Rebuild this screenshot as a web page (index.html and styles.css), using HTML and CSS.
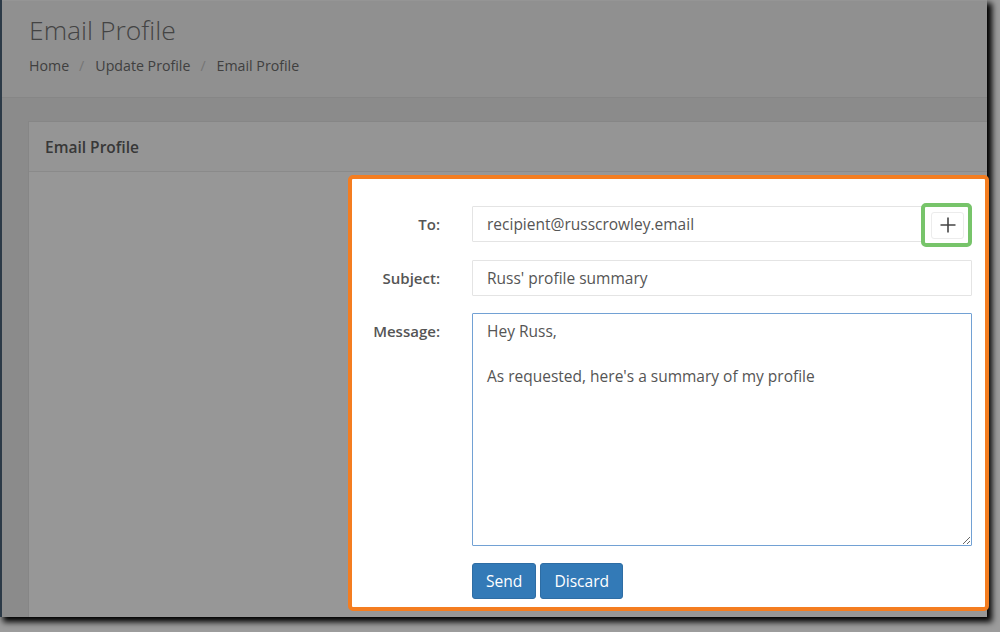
FILE: index.html
```html
<!DOCTYPE html>
<html lang="en">
<head>
<meta charset="utf-8">
<title>Email Profile</title>
<link rel="stylesheet" href="styles.css">
</head>
<body>
<div class="screen">
  <div class="sidebar-edge"></div>
  <div class="main">
    <div class="page-header">
      <h1 class="page-title">Email Profile</h1>
      <ol class="breadcrumb">
        <li>Home</li>
        <li class="sep">/</li>
        <li>Update Profile</li>
        <li class="sep">/</li>
        <li>Email Profile</li>
      </ol>
    </div>
    <div class="content">
      <div class="card">
        <div class="card-header">Email Profile</div>
        <div class="card-body">
          <form class="highlight">
            <div class="form-row">
              <label class="label">To:</label>
              <div class="field">
                <input class="input" type="text" value="recipient@russcrowley.email">
                <div class="add-box"><span class="add-btn"><svg width="18" height="18" viewBox="0 0 18 18"><path d="M9 1.5v15M1.5 9h15" stroke="#454545" stroke-width="1.6" fill="none"/></svg></span></div>
              </div>
            </div>
            <div class="form-row">
              <label class="label">Subject:</label>
              <div class="field">
                <input class="input" type="text" value="Russ' profile summary">
              </div>
            </div>
            <div class="form-row">
              <label class="label">Message:</label>
              <div class="field">
                <textarea class="textarea">Hey Russ,

As requested, here's a summary of my profile</textarea>
              </div>
            </div>
            <div class="actions">
              <button type="button" class="btn">Send</button>
              <button type="button" class="btn">Discard</button>
            </div>
          </form>
        </div>
      </div>
    </div>
    <div class="overlay"></div>
  </div>
</div>
</body>
</html>
```

FILE: styles.css
```css
* { box-sizing: border-box; }
html, body { margin: 0; padding: 0; }
body {
  background: #9c9c9c;
  font-family: "Open Sans", "Liberation Sans", sans-serif;
  width: 1000px;
  height: 632px;
  overflow: hidden;
}
.screen {
  width: 987px;
  height: 617px;
  display: flex;
  box-shadow: 4px 4px 6px 1px #000;
  position: relative;
}
.sidebar-edge {
  width: 2px;
  background: #2c3a47;
  flex: none;
}
.main {
  flex: 1;
  position: relative;
  background: #e8e8e8;
  display: flex;
  flex-direction: column;
}
.overlay {
  position: absolute;
  inset: 0;
  background: rgba(0, 0, 0, 0.4);
  z-index: 1;
}
.page-header {
  height: 98px;
  padding: 11px 0 0 27px;
  background: #f1f1f1;
  border-bottom: 1px solid #e0e0e0;
  border-top: 1px solid #f8f8f8;
}
.page-title {
  margin: 0;
  font-size: 26.5px;
  font-weight: 300;
  line-height: 36px;
  color: #727272;
}
.breadcrumb {
  list-style: none;
  margin: 8px 0 0;
  padding: 0;
  display: flex;
  font-size: 14.2px;
  line-height: 20px;
  color: #6b6b6b;
}
.breadcrumb .sep {
  color: #c4c4c4;
  margin: 0 11px 0 10px;
}
.content {
  flex: 1;
  padding: 23px 0 0 26px;
}
.card {
  background: #fcfcfc;
  border: 1px solid #e0e0e0;
  border-right: none;
  border-bottom: none;
  height: 100%;
}
.card-header {
  height: 50px;
  padding: 0 16px;
  display: flex;
  align-items: center;
  font-size: 15.5px;
  font-weight: 600;
  color: #5e5e5e;
  background: #f8f8f8;
  border-bottom: 1px solid #e6e6e6;
}
.card-body {
  padding: 3px 0 0 319px;
}
.highlight {
  position: relative;
  z-index: 2;
  margin: 0 -2px 0 0;
  background: #fff;
  border: 4px solid #f47d20;
  border-radius: 5px;
  padding: 27px 13px 8px 0;
}
.form-row {
  display: grid;
  grid-template-columns: 88px 1fr;
  column-gap: 32px;
  margin-bottom: 17px;
}
.form-row:first-child { margin-bottom: 18px; }
.label {
  text-align: right;
  font-size: 15px;
  font-weight: 600;
  color: #555;
  line-height: 36px;
}
.field { position: relative; }
.input {
  display: block;
  width: 100%;
  height: 36px;
  border: 1px solid #e4e4e4;
  border-radius: 1px;
  padding: 0 14px;
  font-family: "Open Sans", "Liberation Sans", sans-serif;
  font-size: 15.5px;
  color: #555;
  outline: none;
}
.textarea {
  display: block;
  width: 100%;
  height: 233px;
  border: 1px solid #72a1d4;
  border-radius: 1px;
  padding: 6px 14px;
  font-family: "Open Sans", "Liberation Sans", sans-serif;
  font-size: 15.5px;
  line-height: 22.5px;
  color: #555;
  outline: none;
  resize: both;
}
.add-box {
  position: absolute;
  right: 0;
  top: -3px;
  width: 51px;
  height: 44px;
  border: 4px solid #77c46a;
  border-radius: 5px;
  background: #fff;
  display: flex;
  align-items: center;
  justify-content: center;
  padding-left: 2px;
}
.add-btn {
  width: 33px;
  height: 27px;
  border: 1px solid #ececec;
  border-radius: 3px;
  display: flex;
  align-items: center;
  justify-content: center;
}
.actions {
  padding-left: 120px;
  display: flex;
  gap: 4px;
}
.btn {
  height: 36px;
  padding: 0 13px;
  background: #337ab7;
  border: 1px solid #2e6da4;
  border-radius: 3px;
  color: #fff;
  font-family: "Open Sans", "Liberation Sans", sans-serif;
  font-size: 15.6px;
}
```
